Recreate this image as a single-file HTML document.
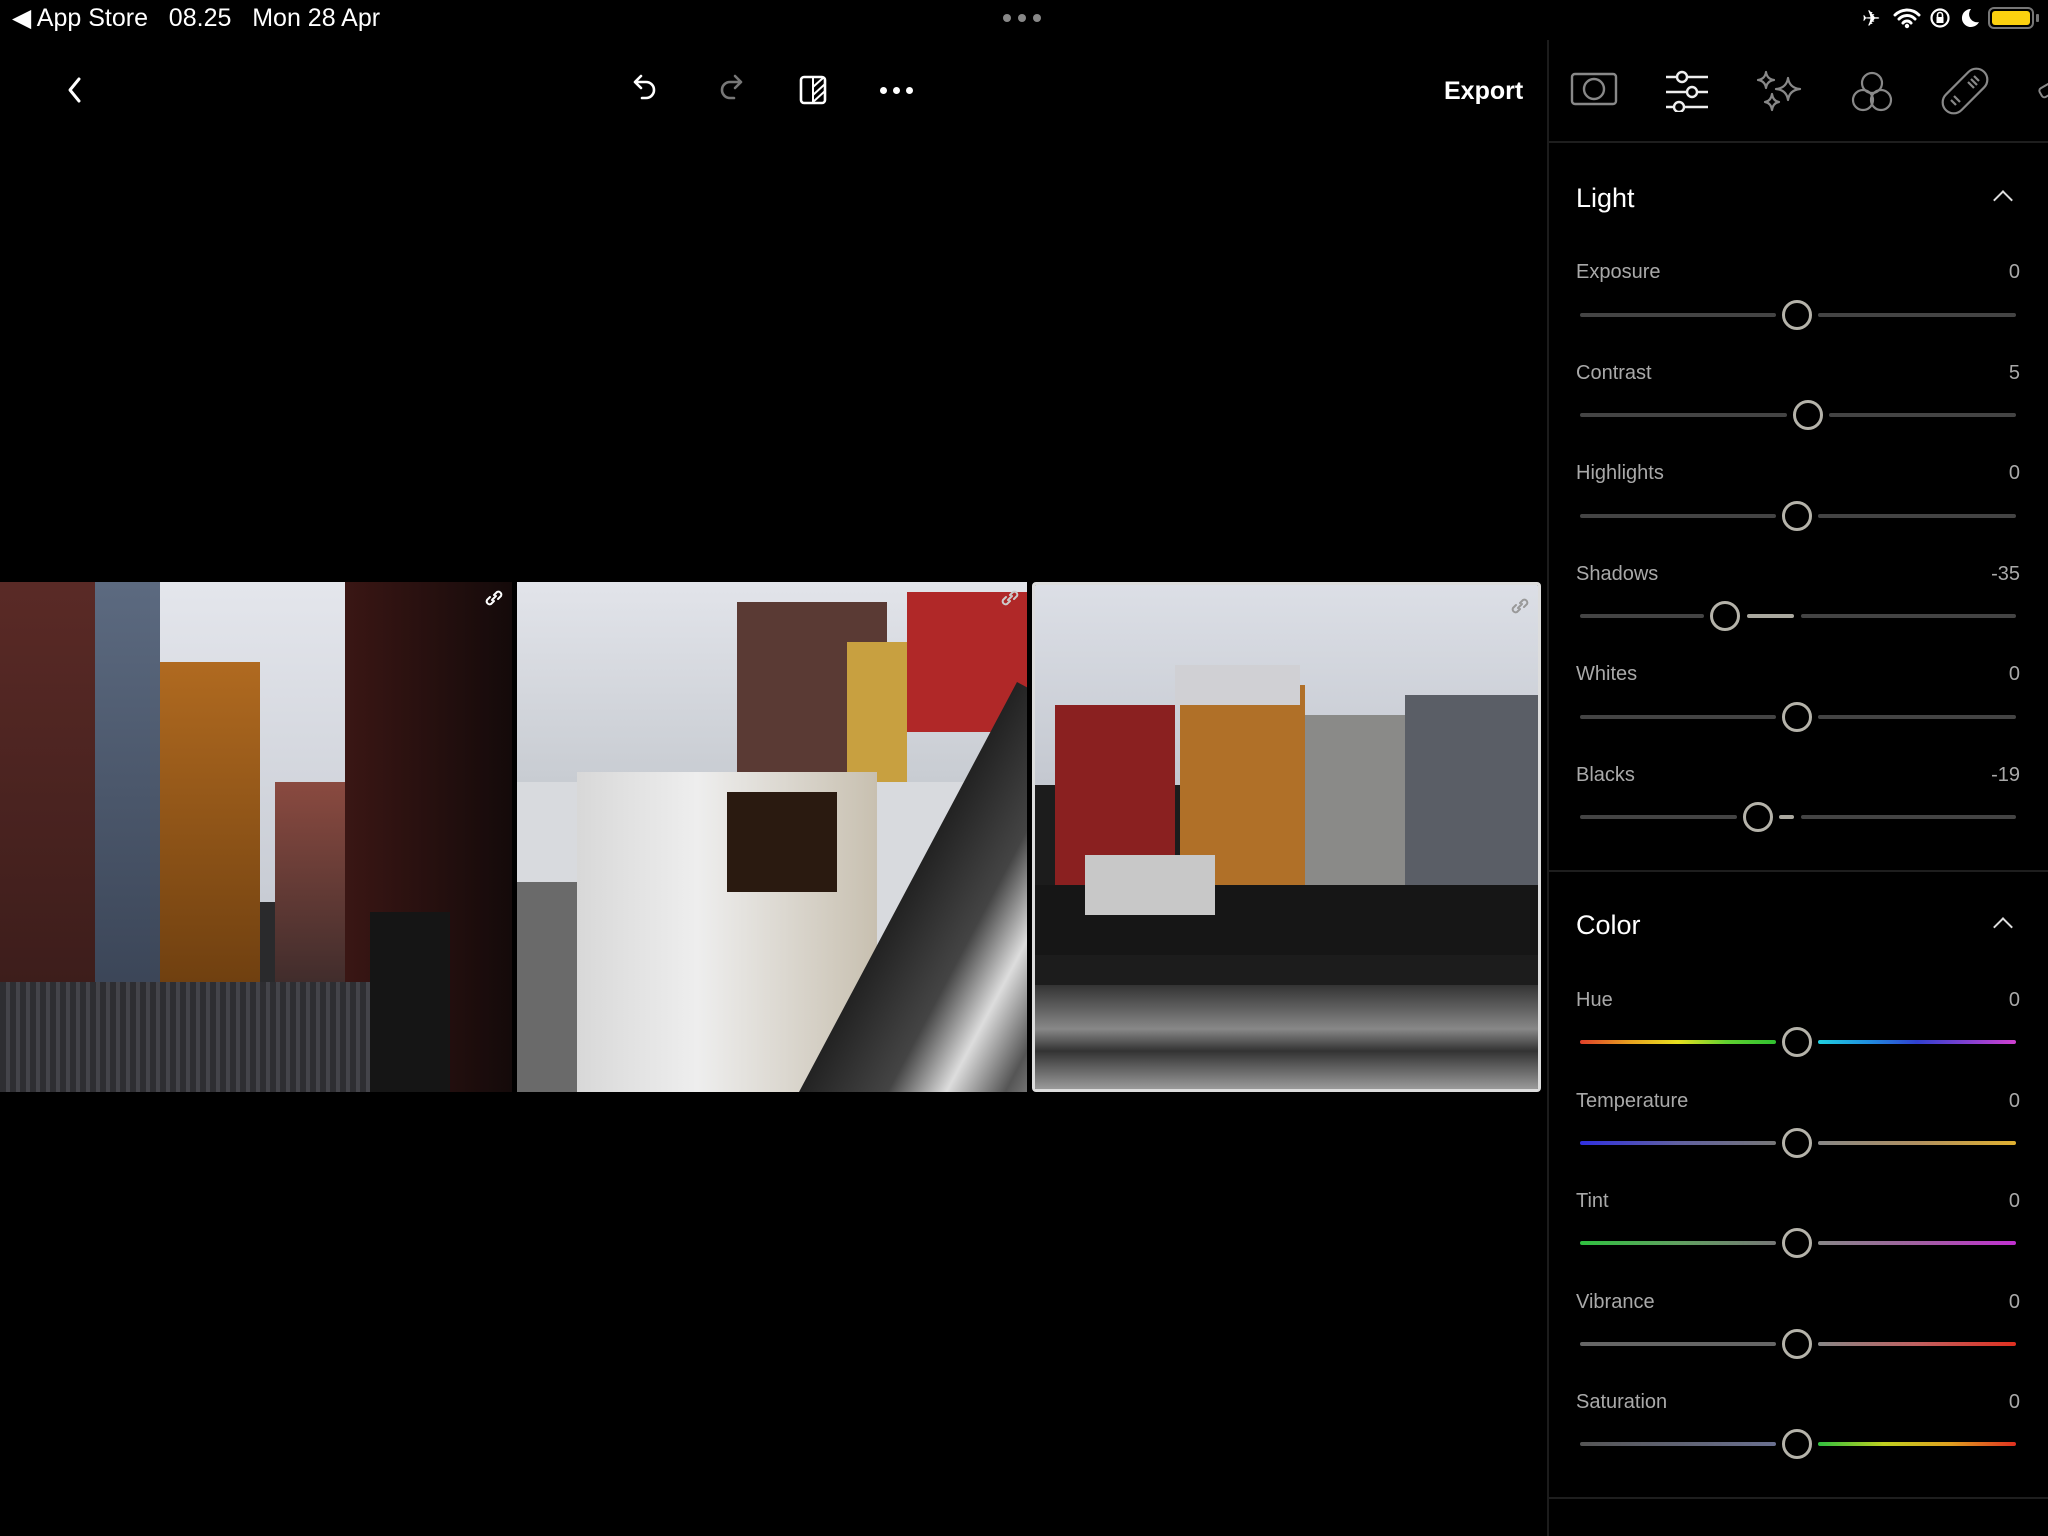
<!DOCTYPE html>
<html><head><meta charset="utf-8"><style>
*{margin:0;padding:0;box-sizing:border-box}
body{width:2048px;height:1536px;background:#000;position:relative;overflow:hidden;font-family:"Liberation Sans",sans-serif;color:#fff}
.a{position:absolute}
.lbl{position:absolute;left:1576px;font-size:20px;color:#a9a9a9;line-height:28px}
.val{position:absolute;right:28px;font-size:20px;color:#a9a9a9;line-height:28px;text-align:right}
.tr{position:absolute;height:4px;background:#444;border-radius:2px}
.act{position:absolute;height:4px;background:#aaa89f;border-radius:2px}
.th{position:absolute;width:30px;height:30px;border:3.5px solid #b5b3aa;border-radius:50%}
.hd{position:absolute;left:1576px;font-size:27px;line-height:34px;color:#fff}
.chev{position:absolute;left:1996px;width:14px;height:14px;border-left:2.5px solid #ddd;border-top:2.5px solid #ddd;transform:rotate(45deg)}
</style></head><body>
<div class="a" style="left:12px;top:2px;font-size:25px;line-height:32px;color:#fff">◀ App Store&nbsp;&nbsp;&nbsp;08.25&nbsp;&nbsp;&nbsp;Mon 28 Apr</div>
<div class="a" style="left:1003px;top:14px;width:42px;height:8px">
<span class="a" style="left:0;width:8px;height:8px;border-radius:50%;background:#888"></span>
<span class="a" style="left:15px;width:8px;height:8px;border-radius:50%;background:#888"></span>
<span class="a" style="left:30px;width:8px;height:8px;border-radius:50%;background:#888"></span></div>
<div class="a" style="left:1862px;top:4px;font-size:22px;line-height:30px">✈</div>
<svg class="a" style="left:1893px;top:7px" width="28" height="22" viewBox="0 0 28 22"><path d="M2 8a17 17 0 0 1 24 0M6 12a11 11 0 0 1 16 0M10 16a5 5 0 0 1 8 0" stroke="#fff" stroke-width="3" fill="none" stroke-linecap="round"/><circle cx="14" cy="19" r="2.2" fill="#fff"/></svg>
<svg class="a" style="left:1929px;top:7px" width="22" height="22" viewBox="0 0 22 22"><circle cx="11" cy="11" r="8.5" stroke="#fff" stroke-width="2.2" fill="none"/><rect x="7.5" y="10" width="7" height="6" fill="#fff"/><path d="M8.5 10V8a2.5 2.5 0 0 1 5 0v2" stroke="#fff" stroke-width="1.6" fill="none"/></svg>
<svg class="a" style="left:1959px;top:7px" width="22" height="22" viewBox="0 0 22 22"><path d="M12 2a9 9 0 1 0 8 13A8 8 0 0 1 12 2z" fill="#fff"/></svg>
<div class="a" style="left:1988px;top:7px;width:46px;height:22px;border:2px solid #777;border-radius:6px;padding:2px"><div style="width:100%;height:100%;background:#fcd10f;border-radius:3px"></div></div>
<div class="a" style="left:2036px;top:14px;width:3px;height:8px;background:#777;border-radius:1px"></div>

<svg class="a" style="left:62px;top:76px" width="26" height="28" viewBox="0 0 26 28"><path d="M17 3L8 14l9 11" stroke="#fff" stroke-width="3" fill="none" stroke-linecap="round" stroke-linejoin="round"/></svg>
<svg class="a" style="left:630px;top:72px" width="32" height="36" viewBox="0 0 32 36"><path d="M11 4L5 10l6 6M5 10h11a8 8 0 0 1 0 16h-4" stroke="#fff" stroke-width="2.6" fill="none" stroke-linecap="round" stroke-linejoin="round"/></svg>
<svg class="a" style="left:714px;top:72px" width="32" height="36" viewBox="0 0 32 36"><path d="M21 4l6 6-6 6M27 10H16a8 8 0 0 0 0 16h4" stroke="#777" stroke-width="2.6" fill="none" stroke-linecap="round" stroke-linejoin="round"/></svg>
<svg class="a" style="left:799px;top:75px" width="28" height="30" viewBox="0 0 28 30"><rect x="2" y="2" width="24" height="26" rx="3" stroke="#fff" stroke-width="2.6" fill="none"/><path d="M14 2v26M14 12l10-9M14 20l12-11M14 27l12-11" stroke="#fff" stroke-width="2"/></svg>
<div class="a" style="left:880px;top:87px;width:7px;height:7px;border-radius:50%;background:#fff"></div>
<div class="a" style="left:893px;top:87px;width:7px;height:7px;border-radius:50%;background:#fff"></div>
<div class="a" style="left:906px;top:87px;width:7px;height:7px;border-radius:50%;background:#fff"></div>
<div class="a" style="left:1444px;top:74px;font-size:25px;font-weight:bold;line-height:34px">Export</div>

<div class="a" style="left:1547px;top:40px;width:2px;height:1496px;background:#1c1c1c"></div>
<div class="a" style="left:1549px;top:141px;width:499px;height:2px;background:#1e1e1e"></div>
<div class="a" style="left:1549px;top:870px;width:499px;height:2px;background:#1e1e1e"></div>
<div class="a" style="left:1549px;top:1497px;width:499px;height:2px;background:#1e1e1e"></div>
<svg class="a" style="left:1570px;top:72px" width="48" height="36" viewBox="0 0 48 36"><rect x="2" y="2" width="44" height="30" rx="3" stroke="#888" stroke-width="2.4" fill="none"/><circle cx="24" cy="17" r="10" stroke="#888" stroke-width="2.4" fill="none"/></svg>
<svg class="a" style="left:1664px;top:70px" width="46" height="42" viewBox="0 0 46 42"><path d="M2 7h42M2 22h42M2 37h42" stroke="#eee" stroke-width="2.4"/><circle cx="18" cy="7" r="5" fill="#000" stroke="#eee" stroke-width="2.4"/><circle cx="28" cy="22" r="5" fill="#000" stroke="#eee" stroke-width="2.4"/><circle cx="15" cy="37" r="5" fill="#000" stroke="#eee" stroke-width="2.4"/></svg>
<svg class="a" style="left:1756px;top:70px" width="48" height="44" viewBox="0 0 48 44"><g stroke="#888" stroke-width="2.2" fill="none" stroke-linejoin="round"><path d="M10 2q1 7 8 8q-7 1-8 8q-1-7-8-8q7-1 8-8z"/><path d="M32 8q1.5 10 12 11q-10.5 1-12 11q-1.5-10-12-11q10.5-1 12-11z"/><path d="M16 24q1 7 7 8q-6 1-7 8q-1-7-7-8q6-1 7-8z"/></g></svg>
<svg class="a" style="left:1850px;top:70px" width="44" height="44" viewBox="0 0 44 44"><g stroke="#888" stroke-width="2.2" fill="none"><circle cx="22" cy="13" r="10"/><circle cx="13" cy="30" r="10"/><circle cx="31" cy="30" r="10"/></g></svg>
<svg class="a" style="left:1940px;top:66px" width="50" height="50" viewBox="0 0 50 50"><g stroke="#888" stroke-width="2.2" fill="none"><rect x="14" y="-2" width="22" height="54" rx="11" transform="rotate(45 25 25)"/><path d="M14 30l6 6M11 34l5 5M31 13l6 6M34 10l5 5M28 16l6 6"/></g></svg>
<svg class="a" style="left:2038px;top:80px" width="10" height="24"><rect x="2" y="6" width="14" height="10" rx="3" stroke="#888" stroke-width="2" fill="none" transform="rotate(-30 8 11)"/></svg>

<div class="hd" style="top:181px">Light</div>
<div class="chev" style="top:193px"></div>
<div class="hd" style="top:908px">Color</div>
<div class="chev" style="top:920px"></div>

<div class="lbl" style="top:258px">Exposure</div><div class="val" style="top:258px">0</div>
<div class="tr" style="left:1580px;top:313px;width:196px"></div><div class="tr" style="left:1818px;top:313px;width:198px"></div><div class="th" style="left:1782px;top:300px"></div>

<div class="lbl" style="top:359px">Contrast</div><div class="val" style="top:359px">5</div>
<div class="tr" style="left:1580px;top:413px;width:207px"></div><div class="tr" style="left:1829px;top:413px;width:187px"></div><div class="th" style="left:1793px;top:400px"></div>

<div class="lbl" style="top:459px">Highlights</div><div class="val" style="top:459px">0</div>
<div class="tr" style="left:1580px;top:514px;width:196px"></div><div class="tr" style="left:1818px;top:514px;width:198px"></div><div class="th" style="left:1782px;top:501px"></div>

<div class="lbl" style="top:560px">Shadows</div><div class="val" style="top:560px">-35</div>
<div class="tr" style="left:1580px;top:614px;width:124px"></div><div class="act" style="left:1747px;top:614px;width:47px"></div><div class="tr" style="left:1801px;top:614px;width:215px"></div><div class="th" style="left:1710px;top:601px"></div>

<div class="lbl" style="top:660px">Whites</div><div class="val" style="top:660px">0</div>
<div class="tr" style="left:1580px;top:715px;width:196px"></div><div class="tr" style="left:1818px;top:715px;width:198px"></div><div class="th" style="left:1782px;top:702px"></div>

<div class="lbl" style="top:761px">Blacks</div><div class="val" style="top:761px">-19</div>
<div class="tr" style="left:1580px;top:815px;width:157px"></div><div class="act" style="left:1779px;top:815px;width:15px"></div><div class="tr" style="left:1801px;top:815px;width:215px"></div><div class="th" style="left:1743px;top:802px"></div>

<div class="lbl" style="top:986px">Hue</div><div class="val" style="top:986px">0</div>
<div class="tr" style="left:1580px;top:1040px;width:196px;background:linear-gradient(90deg,#e0402a,#e8a020,#e8e020,#60d030,#30c030)"></div><div class="tr" style="left:1818px;top:1040px;width:198px;background:linear-gradient(90deg,#20d0e0,#2090e0,#3040d0,#8040d0,#d040d0)"></div><div class="th" style="left:1782px;top:1027px"></div>

<div class="lbl" style="top:1087px">Temperature</div><div class="val" style="top:1087px">0</div>
<div class="tr" style="left:1580px;top:1141px;width:196px;background:linear-gradient(90deg,#3030e0,#6060a0,#777)"></div><div class="tr" style="left:1818px;top:1141px;width:198px;background:linear-gradient(90deg,#888,#b09060,#e0b030)"></div><div class="th" style="left:1782px;top:1128px"></div>

<div class="lbl" style="top:1187px">Tint</div><div class="val" style="top:1187px">0</div>
<div class="tr" style="left:1580px;top:1241px;width:196px;background:linear-gradient(90deg,#30c040,#60a060,#777)"></div><div class="tr" style="left:1818px;top:1241px;width:198px;background:linear-gradient(90deg,#888,#a060a0,#c030d0)"></div><div class="th" style="left:1782px;top:1228px"></div>

<div class="lbl" style="top:1288px">Vibrance</div><div class="val" style="top:1288px">0</div>
<div class="tr" style="left:1580px;top:1342px;width:196px;background:#666"></div><div class="tr" style="left:1818px;top:1342px;width:198px;background:linear-gradient(90deg,#888,#c06060,#e03020)"></div><div class="th" style="left:1782px;top:1329px"></div>

<div class="lbl" style="top:1388px">Saturation</div><div class="val" style="top:1388px">0</div>
<div class="tr" style="left:1580px;top:1442px;width:196px;background:linear-gradient(90deg,#555,#6a7090)"></div><div class="tr" style="left:1818px;top:1442px;width:198px;background:linear-gradient(90deg,#30c040,#c0d020,#e0a020,#e03020)"></div><div class="th" style="left:1782px;top:1429px"></div>

<div class="a" style="left:0;top:582px;width:512px;height:510px;overflow:hidden;background:#2a2a2c">
<div class="a" style="left:155px;top:0;width:200px;height:320px;background:linear-gradient(#e4e6ec,#c8ccd4)"></div>
<div class="a" style="left:0;top:0;width:98px;height:440px;background:linear-gradient(#5a2a26,#3a1c1a)"></div>
<div class="a" style="left:95px;top:0;width:65px;height:420px;background:linear-gradient(#5c6a80,#3a4456)"></div>
<div class="a" style="left:160px;top:80px;width:100px;height:320px;background:linear-gradient(#b06a20,#704010)"></div>
<div class="a" style="left:275px;top:200px;width:80px;height:220px;background:linear-gradient(#8a4a40,#3a2a2a)"></div>
<div class="a" style="left:345px;top:0;width:167px;height:510px;background:linear-gradient(90deg,#3a1614,#140a0a)"></div>
<div class="a" style="left:0;top:400px;width:420px;height:110px;background:repeating-linear-gradient(90deg,#2e2e32 0 6px,#44444a 6px 10px)"></div>
<div class="a" style="left:370px;top:330px;width:80px;height:180px;background:#151515"></div>
</div>
<svg class="a" style="left:482px;top:586px" width="24" height="24" viewBox="0 0 24 24"><path d="M10 14l4-4M8 11l-3 3a3 3 0 0 0 4 4l3-3M16 13l3-3a3 3 0 0 0-4-4l-3 3" stroke="#fff" stroke-width="2" fill="none" stroke-linecap="round"/></svg>
<div class="a" style="left:517px;top:582px;width:510px;height:510px;overflow:hidden;background:#d8dade">
<div class="a" style="left:0;top:0;width:510px;height:200px;background:linear-gradient(#e2e4ea,#c8ccd2)"></div>
<div class="a" style="left:220px;top:20px;width:150px;height:170px;background:#5a3a34"></div>
<div class="a" style="left:330px;top:60px;width:60px;height:140px;background:#c8a040"></div>
<div class="a" style="left:390px;top:10px;width:120px;height:140px;background:#b02828"></div>
<div class="a" style="left:60px;top:190px;width:300px;height:320px;background:linear-gradient(90deg,#d8d8d8,#eee 40%,#c8c0b0)"></div>
<div class="a" style="left:210px;top:210px;width:110px;height:100px;background:#2a1a10"></div>
<div class="a" style="left:0;top:300px;width:60px;height:210px;background:#6a6a6a"></div>
<div class="a" style="top:100px;width:260px;height:600px;background:linear-gradient(90deg,#222,#444 30%,#ddd 50%,#555 70%,#ccc);transform:rotate(28deg);transform-origin:0 0;left:500px"></div>
</div>
<div class="a" style="left:1032px;top:582px;width:509px;height:510px;border:3px solid #ddd;border-radius:4px;overflow:hidden;background:#1c1c1c">
<div class="a" style="left:0;top:0;width:509px;height:200px;background:linear-gradient(#dcdfe6,#c4c8d0)"></div>
<div class="a" style="left:20px;top:120px;width:120px;height:190px;background:#8a2020"></div>
<div class="a" style="left:145px;top:100px;width:125px;height:210px;background:#b07028"></div>
<div class="a" style="left:140px;top:80px;width:125px;height:40px;background:#d0d0d4"></div>
<div class="a" style="left:270px;top:130px;width:100px;height:180px;background:#8a8a88"></div>
<div class="a" style="left:370px;top:110px;width:140px;height:200px;background:#5a5e66"></div>
<div class="a" style="left:0;top:300px;width:509px;height:70px;background:#161616"></div>
<div class="a" style="left:50px;top:270px;width:130px;height:60px;background:#c8c8c8"></div>
<div class="a" style="left:0;top:400px;width:509px;height:110px;background:linear-gradient(#333,#888 40%,#333 60%,#aaa)"></div>
</div>
<svg class="a" style="left:1508px;top:594px" width="24" height="24" viewBox="0 0 24 24"><path d="M10 14l4-4M8 11l-3 3a3 3 0 0 0 4 4l3-3M16 13l3-3a3 3 0 0 0-4-4l-3 3" stroke="#999" stroke-width="2" fill="none" stroke-linecap="round"/></svg>
<svg class="a" style="left:998px;top:586px" width="24" height="24" viewBox="0 0 24 24"><path d="M10 14l4-4M8 11l-3 3a3 3 0 0 0 4 4l3-3M16 13l3-3a3 3 0 0 0-4-4l-3 3" stroke="#ccc" stroke-width="2" fill="none" stroke-linecap="round"/></svg>
</body></html>
